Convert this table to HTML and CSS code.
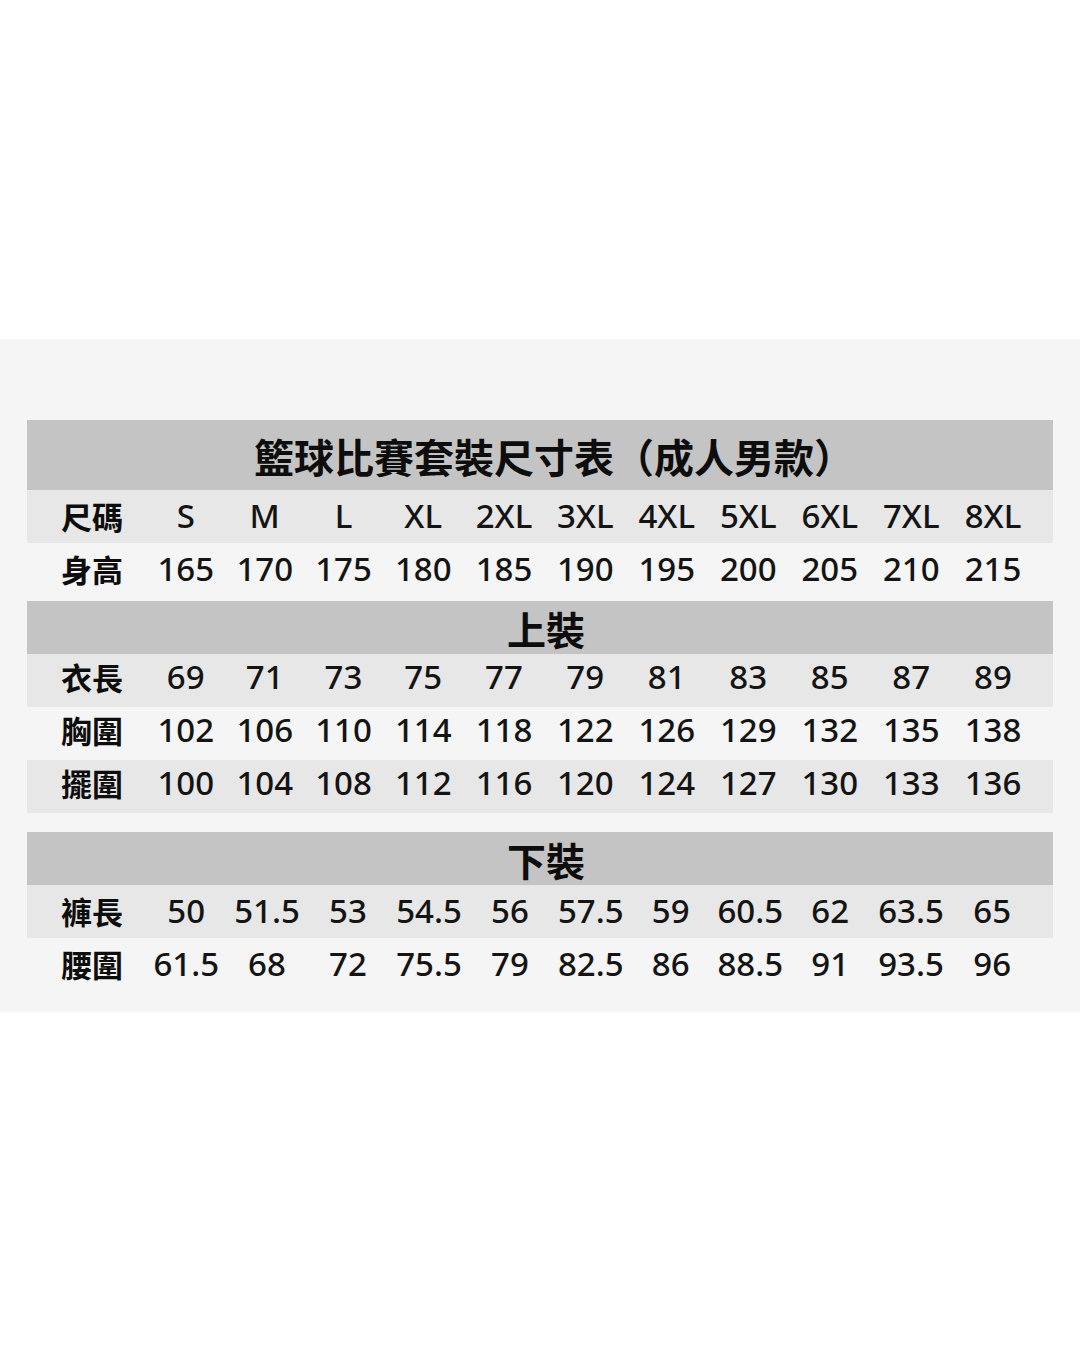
FILE: index.html
```html
<!DOCTYPE html>
<html lang="zh-Hant">
<head>
<meta charset="utf-8">
<title>籃球比賽套裝尺寸表（成人男款）</title>
<link rel="stylesheet" href="styles.css">
</head>
<body>
<div class="page">
  <div class="top-space"></div>
  <section class="panel">
    <div class="table">
      <div class="bar title">籃球比賽套裝尺寸表（成人男款）</div>
      <div class="row shade lift1">
        <div class="label">尺碼</div>
        <div>S</div><div>M</div><div>L</div><div>XL</div><div>2XL</div><div>3XL</div><div>4XL</div><div>5XL</div><div>6XL</div><div>7XL</div><div>8XL</div>
      </div>
      <div class="row tall lift4">
        <div class="label">身高</div>
        <div>165</div><div>170</div><div>175</div><div>180</div><div>185</div><div>190</div><div>195</div><div>200</div><div>205</div><div>210</div><div>215</div>
      </div>
      <div class="bar section">上裝</div>
      <div class="row shade lift4">
        <div class="label">衣長</div>
        <div>69</div><div>71</div><div>73</div><div>75</div><div>77</div><div>79</div><div>81</div><div>83</div><div>85</div><div>87</div><div>89</div>
      </div>
      <div class="row lift4">
        <div class="label">胸圍</div>
        <div>102</div><div>106</div><div>110</div><div>114</div><div>118</div><div>122</div><div>126</div><div>129</div><div>132</div><div>135</div><div>138</div>
      </div>
      <div class="row shade lift4">
        <div class="label">擺圍</div>
        <div>100</div><div>104</div><div>108</div><div>112</div><div>116</div><div>120</div><div>124</div><div>127</div><div>130</div><div>133</div><div>136</div>
      </div>
      <div class="gap"></div>
      <div class="bar section">下裝</div>
      <div class="row lower shade lift1">
        <div class="label">褲長</div>
        <div>50</div><div>51.5</div><div>53</div><div>54.5</div><div>56</div><div>57.5</div><div>59</div><div>60.5</div><div>62</div><div>63.5</div><div>65</div>
      </div>
      <div class="row lower lift1">
        <div class="label">腰圍</div>
        <div>61.5</div><div>68</div><div>72</div><div>75.5</div><div>79</div><div>82.5</div><div>86</div><div>88.5</div><div>91</div><div>93.5</div><div>96</div>
      </div>
    </div>
  </section>
</div>
</body>
</html>
```

FILE: styles.css
```css
html, body {
  margin: 0;
  padding: 0;
  background: #ffffff;
}

.page {
  width: 1080px;
  height: 1350px;
  background: #ffffff;
  color: #111111;
  font-family: "Noto Sans", "Noto Sans CJK TC", sans-serif;
}

.top-space {
  height: 339px;
}

.panel {
  background: #f5f5f5;
  padding: 81px 27px 21px 27px;
}

.table {
  display: flex;
  flex-direction: column;
}

.bar {
  background: #c4c4c4;
  display: flex;
  align-items: center;
  justify-content: center;
  font-family: "Noto Sans CJK TC", sans-serif;
  font-weight: 700;
  color: #0d0d0d;
}

.title {
  height: 70px;
  font-size: 40px;
  padding-left: 28px;
  padding-top: 2px;
  box-sizing: border-box;
}

.section {
  height: 53px;
  font-size: 39px;
  padding-left: 12px;
  padding-top: 1px;
  box-sizing: border-box;
}

.row {
  display: grid;
  grid-template-columns: 119px 79.5px 78.5px 79px 80.5px 81px 81.5px 81.5px 81.5px 81.5px 81.5px 82px 1fr;
  align-items: center;
  height: 53px;
  box-sizing: border-box;
  font-size: 33px;
  font-weight: 500;
  color: #141414;
}

.row.lower {
  grid-template-columns: 119px 80.5px 81px 81px 81px 81px 80.5px 79.5px 79.5px 80.5px 81px 81.5px 1fr;
}

.row > div {
  text-align: center;
  white-space: nowrap;
}

.row .label {
  text-align: left;
  padding-left: 34px;
  font-family: "Noto Sans CJK TC", sans-serif;
  font-weight: 700;
  font-size: 31px;
  color: #0d0d0d;
}

.row.shade {
  background: #e7e7e7;
}

.row.tall {
  height: 58px;
}

.row.lift1 {
  padding-bottom: 3px;
}

.row.lift4 {
  padding-bottom: 8px;
}

.gap {
  height: 19px;
}
```
